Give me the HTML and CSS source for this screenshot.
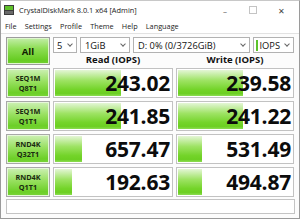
FILE: index.html
```html
<!DOCTYPE html>
<html>
<head>
<meta charset="utf-8">
<link rel="stylesheet" href="styles.css">
</head>
<body>
<div class="window">
  <div class="titlebar">
    <svg class="appicon" width="10" height="10" viewBox="0 0 10 10">
      <rect x="0" y="0" width="10" height="10" fill="#3c3c3c"/>
      <rect x="1" y="1" width="8" height="4" fill="#5fc02a"/>
      <rect x="1" y="6" width="8" height="3" fill="#6a6a6a"/>
    </svg>
    <span class="title">CrystalDiskMark 8.0.1 x64 [Admin]</span>
    <span class="ctl min">–</span>
    <span class="ctl max"></span>
    <span class="ctl close">✕</span>
  </div>
  <div class="menubar">
    <span>File</span><span>Settings</span><span>Profile</span><span>Theme</span><span>Help</span><span>Language</span>
  </div>
  <div class="main">
    <div class="top">
      <div class="allbtn">All</div>
      <div class="topright">
        <div class="controls">
          <div class="dd w5"><span>5</span><i class="chev"></i></div>
          <div class="dd wsize"><span>1GiB</span><i class="chev"></i></div>
          <div class="dd wdrive"><span>D: 0% (0/3726GiB)</span><i class="chev"></i></div>
          <div class="dd wunit"><b class="mark"></b><span>IOPS</span><i class="chev"></i></div>
        </div>
        <div class="heads">
          <div>Read (IOPS)</div>
          <div>Write (IOPS)</div>
        </div>
      </div>
    </div>
    <div class="row">
      <div class="label">SEQ1M<br>Q8T1</div>
      <div class="cell"><div class="bar" style="width:56%"></div><span class="val">243.02</span></div>
      <div class="cell"><div class="bar" style="width:56%"></div><span class="val">239.58</span></div>
    </div>
    <div class="row">
      <div class="label">SEQ1M<br>Q1T1</div>
      <div class="cell"><div class="bar" style="width:56%"></div><span class="val">241.85</span></div>
      <div class="cell"><div class="bar" style="width:56%"></div><span class="val">241.22</span></div>
    </div>
    <div class="row">
      <div class="label">RND4K<br>Q32T1</div>
      <div class="cell"><div class="bar" style="width:23%"></div><span class="val">657.47</span></div>
      <div class="cell"><div class="bar" style="width:21%"></div><span class="val">531.49</span></div>
    </div>
    <div class="row">
      <div class="label">RND4K<br>Q1T1</div>
      <div class="cell"><div class="bar" style="width:14%"></div><span class="val">192.63</span></div>
      <div class="cell"><div class="bar" style="width:21%"></div><span class="val">494.87</span></div>
    </div>
    <div class="status"></div>
  </div>
</div>
</body>
</html>
```
FILE: styles.css
```css
html, body {
  margin: 0;
  padding: 0;
  background: #fff;
}
body {
  width: 300px;
  height: 219px;
  overflow: hidden;
  font-family: "Open Sans", "Noto Sans", sans-serif;
  color: #111;
}
.window {
  box-sizing: border-box;
  width: 300px;
  height: 219px;
  border: 1px solid #9a9a9a;
  border-top-color: #c8c8c8;
  background: #fcfcfc;
}
.titlebar {
  height: 18px;
  display: flex;
  align-items: center;
  background: #fff;
  font-size: 7.4px;
}
.appicon {
  margin-left: 3px;
  margin-right: 5px;
}
.title {
  flex: 1;
  color: #222;
}
.ctl {
  width: 28px;
  text-align: center;
  font-size: 8px;
  color: #444;
}
.ctl.min { color: #555; }
.ctl.max {
  display: flex;
  justify-content: center;
}
.ctl.max::before {
  content: "";
  width: 6px;
  height: 6px;
  border: 1px solid #c4c4c4;
}
.ctl.close { margin-right: 4px; font-size: 8px; }
.menubar {
  height: 14px;
  display: flex;
  align-items: center;
  gap: 8.2px;
  padding-left: 4px;
  background: #fff;
  font-size: 7.3px;
  color: #222;
  border-bottom: 1px solid #e2e2e2;
}
.main {
  padding: 3px 4px 0 5px;
  display: flex;
  flex-direction: column;
  gap: 3px;
}
.top {
  display: flex;
  gap: 3px;
  height: 28px;
}
.allbtn {
  box-sizing: border-box;
  width: 44px;
  height: 28px;
  border: 1px solid #9c9c9c;
  background: linear-gradient(#c4eeaa, #8ede55 40%, #66cc22 85%, #74d232);
  box-shadow: inset 0 0 0 1px #dff6cf;
  display: flex;
  align-items: center;
  justify-content: center;
  font-weight: 700;
  font-size: 9.5px;
  color: #102000;
}
.topright {
  display: flex;
  flex-direction: column;
  width: 241px;
}
.controls {
  display: flex;
  gap: 3px;
  height: 16px;
}
.dd {
  box-sizing: border-box;
  height: 16px;
  border: 1px solid #b2b2b2;
  background: #fff;
  display: flex;
  align-items: center;
  font-size: 9.3px;
  color: #111;
  padding-left: 4px;
}
.dd span { flex: 1; white-space: nowrap; }
.w5 { width: 24px; padding-left: 3px; }
.wsize { width: 50px; }
.wdrive { width: 117px; }
.wunit { width: 41px; padding-left: 2px; }
.mark {
  width: 1.5px;
  height: 11px;
  background: #5cc42a;
  margin-right: 2px;
}
.chev {
  width: 3px;
  height: 3px;
  border-right: 1px solid #666;
  border-bottom: 1px solid #666;
  transform: rotate(45deg);
  margin: 0 4px 2px 2px;
}
.heads {
  display: grid;
  grid-template-columns: 120px 118px;
  column-gap: 3px;
  height: 12px;
  align-items: center;
  font-weight: 700;
  font-size: 9.5px;
  text-align: center;
  color: #111;
}
.row {
  display: grid;
  grid-template-columns: 44px 120px 118px;
  column-gap: 3px;
  height: 30px;
}
.label {
  box-sizing: border-box;
  border: 1px solid #a8a8a8;
  background: linear-gradient(#cdf0b5, #98e060 45%, #6ccf27 85%, #7ad53a);
  box-shadow: inset 0 0 0 1px #e6f8da;
  display: flex;
  align-items: center;
  justify-content: center;
  text-align: center;
  font-weight: 700;
  font-size: 7.3px;
  line-height: 10px;
  color: #1a2a10;
}
.cell {
  box-sizing: border-box;
  border: 1px solid #c2c2c2;
  background: #fff;
  position: relative;
  display: flex;
  align-items: center;
  justify-content: flex-end;
}
.bar {
  position: absolute;
  left: 1px;
  top: 1px;
  bottom: 1px;
  background: linear-gradient(#e4f6d6, #9ee364 40%, #74d42a 75%, #6ccf22 90%, #8cdc52);
}
.val {
  position: relative;
  font-weight: 700;
  font-size: 21px;
  line-height: 28px;
  letter-spacing: -0.2px;
  padding-right: 2px;
  color: #0c0c0c;
}
.status {
  box-sizing: border-box;
  height: 15px;
  border: 1px solid #c4c4c4;
  background: #fff;
  margin-top: -1px;
}
```
